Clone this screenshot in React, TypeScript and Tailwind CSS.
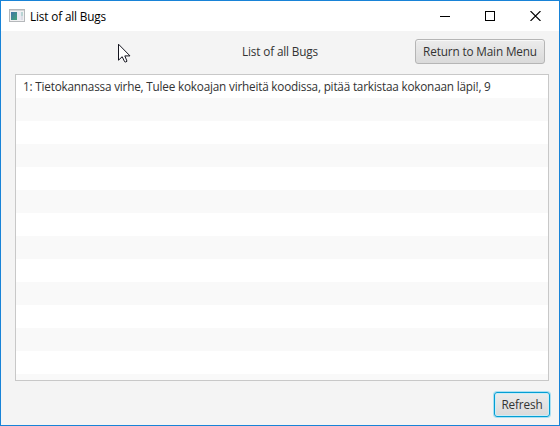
import React from 'react';

const bugs: string[] = [
  '1: Tietokannassa virhe, Tulee kokoajan virheitä koodissa, pitää tarkistaa kokonaan läpi!, 9',
];
const ROW_COUNT = 14;

function AppIcon() {
  return (
    <svg width="16" height="14" viewBox="0 0 16 14" shapeRendering="crispEdges">
      <defs>
        <linearGradient id="pane" x1="0" y1="0" x2="1" y2="1">
          <stop offset="0" stopColor="#3f73a8" />
          <stop offset="1" stopColor="#43a578" />
        </linearGradient>
      </defs>
      <rect x="0.5" y="0.5" width="15" height="12" fill="#f1f1f2" stroke="#b5b8bb" />
      <rect x="1" y="1" width="14" height="1" fill="#d2d4d6" />
      <rect x="2" y="3" width="6" height="8" fill="url(#pane)" />
      <rect x="8" y="3" width="4" height="8" fill="#e9eaf2" />
      <rect x="12" y="3" width="2" height="4" fill="#b9d4d4" />
      <rect x="12" y="7" width="2" height="4" fill="#dcdde6" />
    </svg>
  );
}

function TitleBar() {
  return (
    <header className="flex h-[30px] shrink-0 items-center bg-white pl-2 text-black">
      <AppIcon />
      <span className="ml-[5px] pb-px leading-4 whitespace-nowrap">List of all Bugs</span>
      <div className="ml-auto flex items-center gap-[35px] pr-[18px]">
        <svg width="10" height="10" shapeRendering="crispEdges">
          <path d="M0 5.5H10" stroke="#000" />
        </svg>
        <svg width="10" height="10" shapeRendering="crispEdges">
          <rect x="0.5" y="0.5" width="9" height="9" fill="none" stroke="#000" />
        </svg>
        <svg width="11" height="10" viewBox="0 0 11 10">
          <path d="M0.5 0L10.5 10M10.5 0L0.5 10" stroke="#000" strokeWidth="1.1" />
        </svg>
      </div>
    </header>
  );
}

function Cursor() {
  return (
    <svg className="absolute top-[42px] left-[117px]" width="13" height="21" viewBox="0 0 13 21">
      <path
        d="M0.5 1.2V17.2L4.2 13.7L6.6 18.7Q7.9 19.6 9 18.2L6.8 12.9H12Z"
        fill="#fff"
        stroke="#15151f"
        strokeWidth="1"
      />
    </svg>
  );
}

export default function App() {
  return (
    <div className="relative flex h-[426px] w-[560px] flex-col overflow-hidden border border-[#1883d7] bg-[#f4f4f4] font-['Open_Sans','Noto_Sans',sans-serif] text-[11.75px] leading-4 tracking-[-0.14px] text-[#333]">
      <TitleBar />
      <main className="flex flex-1 flex-col pr-[10px] pl-[14px]">
        <div className="flex h-[43px] items-start justify-end pt-2 pr-1">
          <span className="mt-1 mr-[97px] w-[76px] whitespace-nowrap">List of all Bugs</span>
          <button className="h-[25px] w-[130px] rounded-[3px] border border-[#b5b5b5] bg-linear-to-b from-[#ececec] to-[#dadada] pb-0.5 text-center tracking-[-0.14px] whitespace-nowrap shadow-[inset_0_1px_0_#f8f8f8]">
            Return to Main Menu
          </button>
        </div>
        <ul className="h-[307px] w-[534px] overflow-hidden border border-[#c8c8c8] bg-white">
          {Array.from({ length: ROW_COUNT }, (_, i) => (
            <li key={i} className="flex h-[23px] items-center pb-0.5 pl-[7px] tracking-[-0.2px] whitespace-nowrap even:bg-[#f9f9f9]">
              {bugs[i]}
            </li>
          ))}
        </ul>
        <div className="flex justify-end pt-[11px]">
          <button className="-mr-px h-[25px] w-[56px] rounded-[3px] border border-[#039ed3] bg-linear-to-b from-[#ececec] to-[#dadada] pb-0.5 text-center tracking-[-0.14px] shadow-[0_0_0_1px_#a9dff2,inset_0_0_0_1px_#c9edf8]">
            Refresh
          </button>
        </div>
      </main>
      <Cursor />
    </div>
  );
}
